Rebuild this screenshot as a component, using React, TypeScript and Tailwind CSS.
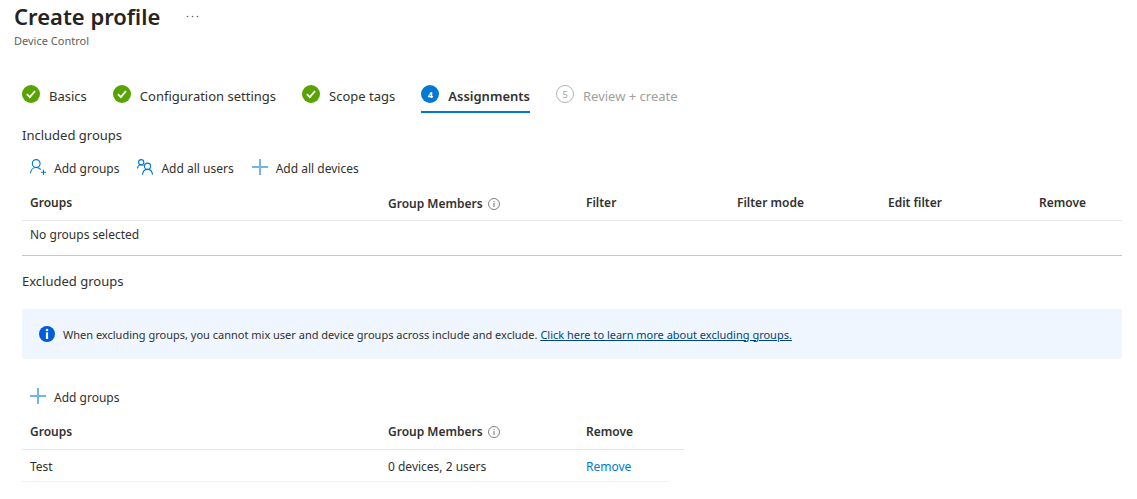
import type { ReactNode } from "react";

const steps = [
    { id: 1, label: "Basics", state: "done" },
    { id: 2, label: "Configuration settings", state: "done" },
    { id: 3, label: "Scope tags", state: "done" },
    { id: 4, label: "Assignments", state: "current" },
    { id: 5, label: "Review + create", state: "todo" },
];

function StepIcon({ id, state }: { id: number; state: string }) {
    if (state === "done") {
        return (
            <svg className="size-[18px] shrink-0" viewBox="0 0 18 18" fill="none">
                <circle cx="9" cy="9" r="9" fill="#57a300" />
                <path d="M4.9 9.2 7.8 12.1 13 6" stroke="#fff" strokeWidth="1.9" />
            </svg>
        );
    }

    return (
        <span
            className={
                state === "current"
                    ? "flex size-[18px] shrink-0 items-center justify-center rounded-full bg-[#0078d4] text-[9px] leading-none font-bold text-white"
                    : "flex size-[18px] shrink-0 items-center justify-center rounded-full border border-[#b5b3b1] text-[9px] leading-none text-[#a19f9d]"
            }
        >
            {id}
        </span>
    );
}

function UserAddIcon() {
    return (
        <svg className="size-4" viewBox="0 0 16 16" fill="none" stroke="#0078d4" strokeWidth="1.1">
            <circle cx="6.2" cy="4.5" r="3.9" />
            <path d="M.5 14.2C.8 10.9 3.2 8.5 6.2 8.5c1.9 0 3.4.7 4.6 2.2" />
            <path d="M13.5 10.8v5M11 13.3h5" />
        </svg>
    );
}

function UsersIcon() {
    return (
        <svg className="size-4" viewBox="0 0 16 16" fill="none" stroke="#0078d4" strokeWidth="1.1">
            <circle cx="4.2" cy="3.2" r="2.6" />
            <path d="M.5 9.5C.7 7.4 2.2 5.8 4.2 5.8c.9 0 1.7.3 2.3.8" />
            <circle cx="10.5" cy="7.2" r="3.1" />
            <path d="M5.5 15.7c.3-3 2.3-5.3 5-5.3s4.7 2.3 5 5.3" />
        </svg>
    );
}

function PlusIcon() {
    return (
        <svg className="size-4" viewBox="0 0 16 16" fill="none" stroke="#0078d4" strokeOpacity=".55" strokeWidth="2">
            <path d="M8 0v16M0 8h16" />
        </svg>
    );
}

function InfoIcon() {
    return (
        <svg className="size-3" viewBox="0 0 12 12" fill="none" stroke="#605e5c">
            <circle cx="6" cy="6" r="5.5" strokeWidth=".8" />
            <path d="M6 5v4M6 3v1.1" strokeWidth=".9" />
        </svg>
    );
}

function CommandButton({ icon, children }: { icon: ReactNode; children: ReactNode }) {
    return (
        <button type="button" className="flex items-center gap-2">
            {icon}
            <span className="pt-1">{children}</span>
        </button>
    );
}

function GroupMembersHead() {
    return (
        <span className="flex items-center gap-[5px] pt-px">
            Group Members
            <InfoIcon />
        </span>
    );
}

export default function CreateProfile() {
    return (
        <main className="min-h-screen bg-white pb-4 font-['Noto_Sans','Open_Sans',sans-serif] text-[12px] leading-4 text-[#323130]">
            <header className="px-[14px] pt-[2px]">
                <div className="flex items-center gap-6">
                    <h1 className="text-[22px] leading-7 font-semibold text-[#252423]">Create profile</h1>
                    <button type="button" aria-label="More actions">
                        <svg className="size-4" viewBox="0 0 16 16" fill="#605e5c">
                            <circle cx="3.5" cy="8.5" r=".8" />
                            <circle cx="8.5" cy="8.5" r=".8" />
                            <circle cx="13.5" cy="8.5" r=".8" />
                        </svg>
                    </button>
                </div>
                <p className="mt-[3px] text-[11px] leading-4 text-[#605e5c]">Device Control</p>
            </header>

            <div className="pr-[15px] pl-[22px]">
                {/* Wizard steps */}
                <nav className="mt-9 flex gap-[26px] text-[13px] leading-5">
                    {steps.map((step) => (
                        <a
                            key={step.id}
                            href="#"
                            className={
                                step.state === "current"
                                    ? "flex h-7 items-start gap-[9px] border-b-2 border-[#0078d4] font-semibold"
                                    : step.state === "todo"
                                      ? "flex h-7 items-start gap-[9px] text-[#a19f9d]"
                                      : "flex h-7 items-start gap-[9px]"
                            }
                        >
                            <StepIcon id={step.id} state={step.state} />
                            <span className="pt-px">{step.label}</span>
                        </a>
                    ))}
                </nav>

                <h2 className="mt-3 text-[13px] leading-5">Included groups</h2>
                <div className="mt-3 flex gap-[18px] px-2">
                    <CommandButton icon={<UserAddIcon />}>Add groups</CommandButton>
                    <CommandButton icon={<UsersIcon />}>Add all users</CommandButton>
                    <CommandButton icon={<PlusIcon />}>Add all devices</CommandButton>
                </div>

                <table className="mt-2 w-full table-fixed border-b border-[#c8c6c4] text-left">
                    <thead>
                        <tr className="h-[35px] border-b border-[#e6e6e6] *:pt-[2px] *:pl-2 *:font-semibold">
                            <th className="w-[358px]">Groups</th>
                            <th className="w-[198px]">
                                <GroupMembersHead />
                            </th>
                            <th className="w-[151px]">Filter</th>
                            <th className="w-[151px]">Filter mode</th>
                            <th className="w-[151px]">Edit filter</th>
                            <th>Remove</th>
                        </tr>
                    </thead>
                    <tbody>
                        <tr className="h-[35px]">
                            <td colSpan={6} className="pb-[6px] pl-2">
                                No groups selected
                            </td>
                        </tr>
                    </tbody>
                </table>

                <h2 className="mt-[15px] text-[13px] leading-5">Excluded groups</h2>
                <div className="mt-[18px] flex min-h-[50px] items-center gap-2 rounded-xs bg-[#eff6ff] px-[17px] text-[11px]">
                    <svg className="size-4 shrink-0" viewBox="0 0 16 16">
                        <circle cx="8" cy="8" r="8" fill="#015cda" />
                        <circle cx="8" cy="4" r="1.3" fill="#fff" />
                        <path d="M6.9 6.4h2.2V13H6.9z" fill="#fff" />
                    </svg>
                    <p className="pt-[2px]">
                        When excluding groups, you cannot mix user and device groups across include and exclude.{" "}
                        <a href="#" className="text-[#004578] underline">
                            Click here to learn more about excluding groups.
                        </a>
                    </p>
                </div>

                <div className="mt-[27px] flex px-2">
                    <CommandButton icon={<PlusIcon />}>Add groups</CommandButton>
                </div>

                <table className="mt-[9px] w-[662px] table-fixed text-left">
                    <thead>
                        <tr className="h-[35px] border-b border-[#e6e6e6] *:pl-2 *:font-semibold">
                            <th className="w-[358px]">Groups</th>
                            <th className="w-[198px]">
                                <GroupMembersHead />
                            </th>
                            <th className="w-[91px]">Remove</th>
                            <td />
                        </tr>
                    </thead>
                    <tbody>
                        <tr className="h-8 *:pt-[2px] *:pl-2">
                            <td className="border-b border-[#f0f0f0]">Test</td>
                            <td className="border-b border-[#f0f0f0]">0 devices, 2 users</td>
                            <td className="border-b border-[#f0f0f0]">
                                <button type="button" className="text-[#0078d4]">
                                    Remove
                                </button>
                            </td>
                            <td />
                        </tr>
                    </tbody>
                </table>
            </div>
        </main>
    );
}
